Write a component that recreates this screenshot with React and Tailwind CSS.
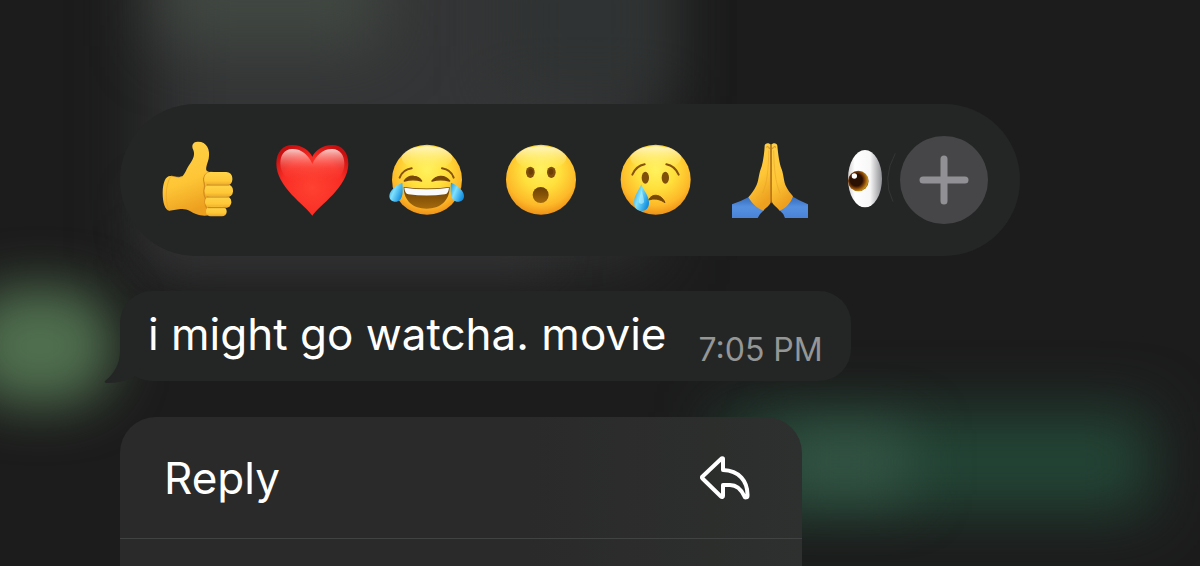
import React, { useState } from 'react';

// Shared gradients for all the emoji drawings
const EmojiDefs = () => (
  <svg width="0" height="0" className="absolute" aria-hidden="true">
    <defs>
      <radialGradient id="face" cx="0.5" cy="0.36" r="0.68">
        <stop offset="0" stopColor="#fff25e" />
        <stop offset="0.4" stopColor="#ffe03c" />
        <stop offset="0.75" stopColor="#fdb929" />
        <stop offset="1" stopColor="#ea8612" />
      </radialGradient>
      <linearGradient id="faceShine" x1="0" y1="0" x2="0" y2="1">
        <stop offset="0" stopColor="#fffbd8" stopOpacity="0.85" />
        <stop offset="1" stopColor="#fff176" stopOpacity="0" />
      </linearGradient>
      <linearGradient id="brown" x1="0" y1="0" x2="0" y2="1">
        <stop offset="0" stopColor="#6a3f04" />
        <stop offset="1" stopColor="#a3690c" />
      </linearGradient>
      <linearGradient id="tear" x1="0" y1="0" x2="1" y2="0.6">
        <stop offset="0" stopColor="#1893e0" />
        <stop offset="0.45" stopColor="#7fe0fb" />
        <stop offset="1" stopColor="#1390e2" />
      </linearGradient>
      <linearGradient id="skin" x1="0" y1="0" x2="0.3" y2="1">
        <stop offset="0" stopColor="#ffd24a" />
        <stop offset="0.6" stopColor="#fec637" />
        <stop offset="1" stopColor="#eda01f" />
      </linearGradient>
      <linearGradient id="finger" x1="0" y1="0" x2="0" y2="1">
        <stop offset="0" stopColor="#ffd54a" />
        <stop offset="0.65" stopColor="#fec837" />
        <stop offset="1" stopColor="#eba526" />
      </linearGradient>
      <radialGradient id="heart" cx="0.5" cy="0.6" r="0.65">
        <stop offset="0" stopColor="#ff4231" />
        <stop offset="0.65" stopColor="#f92d25" />
        <stop offset="1" stopColor="#c70f10" />
      </radialGradient>
      <linearGradient id="heartShine" x1="0" y1="0" x2="0" y2="1">
        <stop offset="0" stopColor="#ffe1dd" stopOpacity="0.9" />
        <stop offset="0.6" stopColor="#ff6a5e" stopOpacity="0.3" />
        <stop offset="1" stopColor="#ff4a3e" stopOpacity="0" />
      </linearGradient>
      <linearGradient id="sleeve" x1="0" y1="0" x2="0" y2="1">
        <stop offset="0" stopColor="#3468b8" />
        <stop offset="0.5" stopColor="#5590e0" />
        <stop offset="1" stopColor="#4a83d6" />
      </linearGradient>
      <linearGradient id="sclera" x1="0" y1="0" x2="1" y2="0">
        <stop offset="0" stopColor="#d5d1d0" />
        <stop offset="0.2" stopColor="#ffffff" />
        <stop offset="0.65" stopColor="#f7f7f8" />
        <stop offset="1" stopColor="#8e8f93" />
      </linearGradient>
      <radialGradient id="iris" cx="0.4" cy="0.45" r="0.65">
        <stop offset="0.45" stopColor="#2a1003" />
        <stop offset="0.62" stopColor="#7b3b06" />
        <stop offset="0.85" stopColor="#c38d15" />
        <stop offset="1" stopColor="#63370a" />
      </radialGradient>
    </defs>
  </svg>
);

const Emoji = ({ children }) => (
  <svg viewBox="0 0 300 300" className="w-[100px] h-[100px]" aria-hidden="true">{children}</svg>
);

const Face = ({ children }) => (
  <>
    <circle cx="150" cy="149" r="105" fill="url(#face)" />
    <ellipse cx="150" cy="84" rx="76" ry="35" fill="url(#faceShine)" />
    {children}
  </>
);

const ThumbsUp = () => (
  <Emoji>
    <g transform="translate(6 0)">
      <path d="M60 138C44 136 36 156 35 188C35 218 42 240 55 242L88 237C110 235 118 245 135 252C150 258 165 258 175 255L206 240L204 140L168 123C162 117 168 104 173 86C179 58 166 34 140 35C124 36 121 47 127 60C132 73 128 86 116 103C106 117 102 132 94 139C85 144 72 140 60 138Z" fill="url(#skin)" />
      <path d="M60 139C49 153 43 185 47 214C49 230 52 240 57 241M94 140C82 144 72 140 60 138" fill="none" stroke="#e6a124" strokeWidth="3" opacity="0.6" />
      <path d="M188 128C172 124 160 132 158 146C157 157 163 163 160 174C157 188 159 197 163 204C161 220 163 229 168 235" fill="none" stroke="#d28d1f" strokeWidth="4" />
      <rect x="160" y="126" width="84" height="41" rx="18" fill="url(#finger)" />
      <rect x="161" y="163" width="85" height="39" rx="18" fill="url(#finger)" />
      <rect x="162" y="198" width="79" height="36" rx="17" fill="url(#finger)" />
      <rect x="165" y="230" width="62" height="29" rx="14" fill="url(#finger)" />
      <path d="M168 165H234M168 201H232M172 233H224" stroke="#c47c18" strokeWidth="3" strokeLinecap="round" />
    </g>
  </Emoji>
);

const Heart = () => (
  <Emoji>
    <path d="M148 257C128 226 40 171 40 101C40 66 60 45 88 45C119 45 140 63 148 80C156 63 177 45 208 45C236 45 256 66 256 101C256 171 168 226 148 257Z" fill="url(#heart)" />
    <path d="M148 102C137 75 115 56 87 57C64 58 52 75 52 101C53 129 70 146 87 154H210C231 145 244 125 244 101C244 75 231 58 208 57C181 56 160 75 148 102Z" fill="url(#heartShine)" />
  </Emoji>
);

const Joy = () => (
  <Emoji>
    <Face>
      <path d="M68 143Q77 119 104 115M195 115Q222 119 230 143" fill="none" stroke="#86520c" strokeWidth="6" strokeLinecap="round" />
      <path d="M82 153Q93 137 111 139Q127 140 134 153Q108 146 82 153ZM165 153Q174 140 190 139Q207 138 218 153Q190 146 165 153Z" fill="#794706" stroke="#794706" strokeWidth="4" strokeLinejoin="round" />
      <path d="M80 171Q149 180 218 171C218 212 190 236 149 236C108 236 80 212 80 171Z" fill="url(#brown)" />
      <path d="M82 173Q149 182 216 173Q215 191 204 193Q149 200 94 193Q83 190 82 173Z" fill="#f9fafb" />
      <path d="M76 158C58 165 37 181 37 198C37 210 48 217 59 215C80 211 78 180 76 158Z" fill="url(#tear)" />
      <path d="M222 158C240 165 261 181 261 198C261 210 250 217 239 215C218 211 220 180 222 158Z" fill="url(#tear)" />
    </Face>
  </Emoji>
);

const Wow = () => (
  <Emoji>
    <Face>
      <ellipse cx="118" cy="127" rx="13" ry="17" fill="#80500b" />
      <ellipse cx="181" cy="127" rx="13" ry="17" fill="#80500b" />
      <ellipse cx="119" cy="125" rx="7" ry="9" fill="#6b3e05" />
      <ellipse cx="180" cy="125" rx="7" ry="9" fill="#6b3e05" />
      <circle cx="149" cy="195" r="24" fill="url(#brown)" />
    </Face>
  </Emoji>
);

const Cry = () => (
  <Emoji>
    <g transform="translate(2 0)">
      <Face>
        <path d="M80 134Q91 108 117 103M182 103Q208 108 219 134" fill="none" stroke="#86520c" strokeWidth="6" strokeLinecap="round" />
        <ellipse cx="119" cy="143" rx="11" ry="18" fill="#80500b" />
        <ellipse cx="179" cy="143" rx="11" ry="18" fill="#80500b" />
        <path d="M129 210C137 190 167 190 178 218Q154 201 129 210Z" fill="#794706" stroke="#794706" strokeWidth="3" strokeLinejoin="round" />
        <path d="M107 163C100 180 85 198 85 217C85 233 94 243 108 243C122 243 131 232 130 216C129 197 113 180 107 163Z" fill="url(#tear)" />
        <path d="M108 181C104 195 99 207 99 217Q106 227 115 217C115 205 111 194 108 181Z" fill="#c2f7ff" opacity="0.55" />
      </Face>
    </g>
  </Emoji>
);

const Pray = () => (
  <Emoji>
    <path d="M39 223Q67 213 91 200Q112 218 135 240Q123 250 116 264H39ZM267 223Q240 212 218 198Q202 222 181 240Q193 249 198 264H267Z" fill="url(#sleeve)" />
    <path d="M155 44C151 37 137 38 137 47C136 70 132 100 125 118C119 133 119 156 111 169C105 181 97 192 88 202C98 219 112 234 133 242C144 230 158 224 156 207Z" fill="url(#skin)" />
    <path d="M157 44C161 37 175 38 175 47C177 70 181 100 188 118C194 133 194 156 201 169C206 180 215 191 222 199C215 219 201 234 182 242C172 229 157 224 157 207Z" fill="url(#skin)" />
    <path d="M156 46V217" fill="none" stroke="#b8741a" strokeWidth="4" strokeLinecap="round" />
    <path d="M143 51C147 48 151 51 151 56M161 56C161 51 166 48 170 51" fill="none" stroke="#cc8a20" strokeWidth="3" strokeLinecap="round" />
    <path d="M149 61C149 112 145 157 131 190M164 61C165 112 169 157 183 190" fill="none" stroke="#e5a024" strokeWidth="3" opacity="0.5" />
  </Emoji>
);

const Eyes = () => (
  <Emoji>
    <ellipse cx="96" cy="146" rx="51" ry="86" fill="url(#sclera)" />
    <circle cx="76" cy="153" r="31" fill="url(#iris)" />
    <circle cx="64" cy="138" r="8" fill="#ffffff" />
    <path d="M187 70Q145 146 180 215" fill="none" stroke="#343636" strokeWidth="3" />
  </Emoji>
);

const reactions = [
  { name: 'Thumbs up', icon: ThumbsUp },
  { name: 'Heart', icon: Heart },
  { name: 'Tears of joy', icon: Joy },
  { name: 'Surprised', icon: Wow },
  { name: 'Crying', icon: Cry },
  { name: 'Folded hands', icon: Pray },
  { name: 'Eyes', icon: Eyes },
];

// The chat behind the menu, out of focus
const Backdrop = () => (
  <div className="absolute inset-0 -z-10 overflow-hidden" aria-hidden="true">
    <div className="absolute -top-20 left-[150px] w-[500px] h-[340px] bg-[#343536] blur-[36px]"></div>
    <div className="absolute -top-16 left-[500px] w-[170px] h-[160px] bg-[#303333] blur-[28px]"></div>
    <div className="absolute -top-16 left-[160px] w-[220px] h-[110px] bg-[#414842] blur-[32px]"></div>
    <div className="absolute top-[200px] left-[150px] w-[400px] h-[70px] bg-[#313132] blur-[24px]"></div>
    <div className="absolute top-[288px] -left-8 w-[144px] h-[116px] rounded-[48px] bg-[#50704f] blur-[26px]"></div>
    <div className="absolute top-[412px] left-[720px] w-[430px] h-[100px] bg-[#234536] blur-[30px]"></div>
    <div className="absolute top-[430px] left-[780px] w-[130px] h-[64px] bg-[#355545] blur-[28px]"></div>
  </div>
);

const ReactionBar = () => {
  const [selected, setSelected] = useState(null);

  return (
    <div className="flex items-center w-full max-w-[900px] pl-[29px] pr-8 py-[26px] rounded-full bg-[#242625]">
      <div className="flex flex-1 min-w-0 gap-[14px] overflow-hidden">
        {reactions.map(({ name, icon: Icon }) => (
          <button
            key={name}
            type="button"
            aria-label={name}
            aria-pressed={selected === name}
            onClick={() => setSelected(selected === name ? null : name)}
            className="shrink-0 cursor-pointer"
          >
            <Icon />
          </button>
        ))}
      </div>
      <button
        type="button"
        aria-label="More reactions"
        className="flex items-center justify-center shrink-0 w-[88px] h-[88px] ml-1 rounded-full bg-[#464648] cursor-pointer"
      >
        <svg viewBox="0 0 50 50" className="w-[50px] h-[50px]" fill="none" stroke="#919094" strokeWidth="7" strokeLinecap="round">
          <path d="M25 4V46M4 25H46" />
        </svg>
      </button>
    </div>
  );
};

const MessageBubble = () => (
  <div className="relative flex items-center gap-8 max-w-full h-[90px] px-7 rounded-[32px] bg-[#242625] whitespace-nowrap">
    <svg viewBox="0 0 40 50" className="absolute -left-4 -bottom-0.5 w-10 h-[50px]" aria-hidden="true">
      <path d="M16 0V18C16 31 10 41 1 48C0 49 1 50 3 50C13 50 22 48 30 44L40 30V0Z" fill="#242625" />
    </svg>
    <p className="relative text-[44px] leading-[56px] pb-1 text-white">i might go watcha. movie</p>
    <time className="text-[32px] leading-10 pt-7 text-[#959696]">7:05 PM</time>
  </div>
);

const ContextMenu = () => (
  <div className="flex flex-col flex-1 w-full max-w-[682px] rounded-t-[36px] bg-linear-to-r from-[#2a2a2a] from-60% to-[#2d302e]">
    <button type="button" className="flex items-center justify-between h-[122px] shrink-0 pl-11 pr-[52px] border-b border-[#414242] text-[44px] leading-[56px] text-white cursor-pointer">
      Reply
      <svg viewBox="0 0 50 44" className="w-[50px] h-11" fill="none" stroke="#ffffff" strokeWidth="4" strokeLinecap="round" strokeLinejoin="round" aria-hidden="true">
        <path d="M23 3C23 2 22 2 21 3L2.5 20.5Q1.5 21.5 2.5 22.5L21 40.5C22 41.5 23 41 23 40V29H30C38 29 42 35 44.5 40.5C45 42 47.5 41.5 47.5 40C48 25 39 14.5 23 14Z" />
      </svg>
    </button>
  </div>
);

const App = () => {
  return (
    <main className="relative isolate flex flex-col items-start h-screen overflow-hidden pt-[104px] pl-[120px] pr-6 bg-[#1c1c1c] font-['Inter','Liberation_Sans',sans-serif]">
      <EmojiDefs />
      <Backdrop />
      <ReactionBar />
      <div className="flex w-full pt-[35px] pb-9">
        <MessageBubble />
      </div>
      <ContextMenu />
    </main>
  );
};

export default App;
